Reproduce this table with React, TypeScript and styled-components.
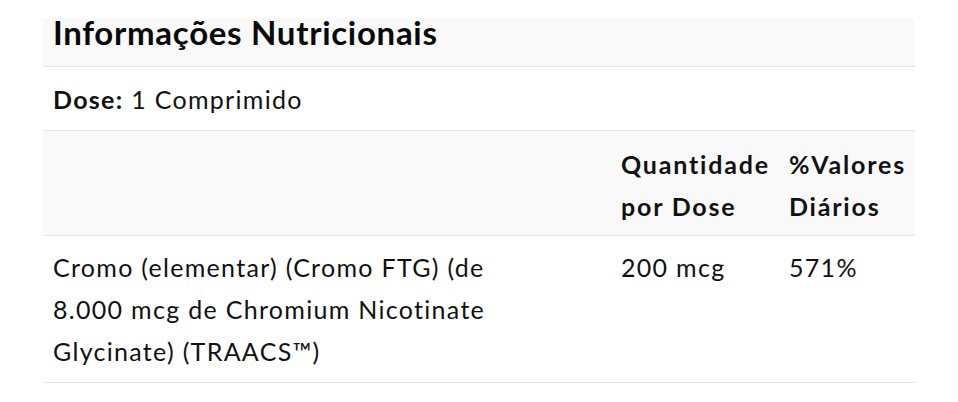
import React from "react";
import styled, { createGlobalStyle } from "styled-components";

const GlobalStyle = createGlobalStyle`
  body {
    margin: 0;
    background: #ffffff;
    font-family: Lato, "Open Sans", Arial, sans-serif;
    color: #111111;
  }
`;

const rows = [
  {
    name: "Cromo (elementar) (Cromo FTG) (de 8.000 mcg de Chromium Nicotinate Glycinate) (TRAACS™)",
    amount: "200 mcg",
    daily: "571%",
  },
];

export default function App() {
  return (
    <>
      <GlobalStyle />
      <StyledPanel>
        <StyledTitleBar>
          <h2>Informações Nutricionais</h2>
        </StyledTitleBar>
        <StyledDose>
          <strong>Dose:</strong> 1 Comprimido
        </StyledDose>
        <StyledTable>
          <thead>
            <tr>
              <th />
              <th>Quantidade por Dose</th>
              <th>%Valores Diários</th>
            </tr>
          </thead>
          <tbody>
            {rows.map((row) => (
              <tr key={row.name}>
                <td>{row.name}</td>
                <td>{row.amount}</td>
                <td>{row.daily}</td>
              </tr>
            ))}
          </tbody>
        </StyledTable>
      </StyledPanel>
    </>
  );
}

const StyledPanel = styled.section`
  width: 872px;
  margin: 18px 0 0 43px;
  font-size: 25px;
  line-height: 42px;
  letter-spacing: 1.3px;
`;

const StyledTitleBar = styled.div`
  height: 48px;
  padding: 0 10px;
  background: #f9f9f9;
  border-bottom: 1px solid #e4e4e4;

  h2 {
    margin: 0;
    font-size: 33px;
    font-weight: 700;
    line-height: 28px;
    letter-spacing: 0.7px;
    color: #0a0a0a;
  }
`;

const StyledDose = styled.div`
  padding: 11px 10px 10px;
  border-bottom: 1px solid #e4e4e4;

  strong {
    font-weight: 700;
  }
`;

const StyledTable = styled.table`
  width: 100%;
  border-collapse: collapse;
  table-layout: fixed;

  th,
  td {
    padding: 10px;
    text-align: left;
    vertical-align: top;
    border-bottom: 1px solid #e4e4e4;
  }

  th:nth-child(1),
  td:nth-child(1) {
    width: 478px;
    padding-right: 80px;
  }

  th:nth-child(2),
  td:nth-child(2) {
    width: 148px;
  }

  thead tr {
    background: #f9f9f9;
  }

  th {
    font-weight: 700;
    padding-top: 12px;
    padding-bottom: 8px;
    letter-spacing: 1.8px;
  }
`;
